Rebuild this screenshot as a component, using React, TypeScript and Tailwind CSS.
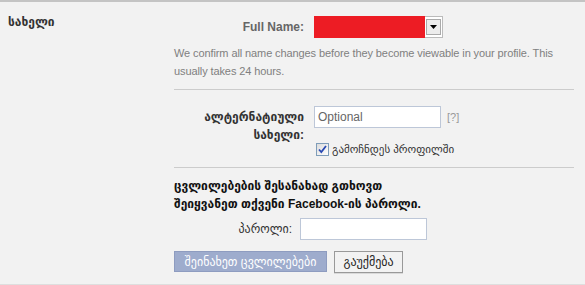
import React from "react";

const font = "font-['Liberation_Sans','DejaVu_Sans',sans-serif]";

export default function App() {
  return (
    <div
      className={`w-[585px] h-[285px] bg-[#f2f2f2] border-t-2 border-[#c4c4c4] border-b border-b-[#dedede] flex text-[12px] ${font}`}
    >
      {/* section title */}
      <div className="w-[174px] pl-2 pt-[11px] font-bold text-[#333]">სახელი</div>

      {/* fields */}
      <div className="w-[400px] pt-[14px]">
        <div className="flex items-center h-[22px]">
          <div className="w-[130px] text-right font-bold text-[#666] text-[12px]">Full Name:</div>
          <div className="ml-[10px] w-[129px] h-[22px] bg-white border border-[#bbb] flex items-center relative">
            <div className="absolute -left-px -top-px w-[111px] h-[22px] bg-[#ed1c24]" />
            <div className="ml-auto mr-[1px] w-[15px] h-[16px] bg-[#ececec] border border-[#aaa] flex items-center justify-center">
              <svg width="7" height="4" viewBox="0 0 7 4">
                <path d="M0 0h7L3.5 4z" fill="#000" />
              </svg>
            </div>
          </div>
        </div>

        <p className="mt-[6px] text-[#808080] leading-[18px] text-[11px] tracking-[-0.1px] whitespace-nowrap">
          We confirm all name changes before they become viewable in your profile. This
          <br />
          usually takes 24 hours.
        </p>

        <div className="mt-[9px] h-px bg-[#cccccc] w-[400px]" />

        <div className="flex mt-[16px]">
          <div className="w-[130px] text-right font-bold text-[#333] leading-[18px] pt-[2px]">
            ალტერნატიული
            <br />
            სახელი:
          </div>
          <div className="ml-[10px]">
            <div className="flex items-center">
              <div className="w-[127px] h-[22px] bg-white border border-[#bdc7d8] flex items-center px-[3px] text-[#666] text-[12px]">
                Optional
              </div>
              <span className="ml-[6px] text-[#999] text-[11px]">[?]</span>
            </div>
            <label className="flex items-center mt-[13px] ml-[2px] text-[#333] text-[11px]">
              <span className="w-[13px] h-[13px] border border-[#7f9db9] bg-gradient-to-br from-[#dcdcdc] to-white flex items-center justify-center">
                <svg width="9" height="9" viewBox="0 0 9 9">
                  <path d="M1 4.5l2.3 2.5L8 1" stroke="#2a4ab3" strokeWidth="1.8" fill="none" />
                </svg>
              </span>
              <span className="ml-[3px]">გამოჩნდეს პროფილში</span>
            </label>
          </div>
        </div>

        <div className="mt-[9px] h-px bg-[#cccccc] w-[400px]" />

        <p className="mt-[9px] font-bold text-[#111] leading-[18px]">
          ცვლილებების შესანახად გთხოვთ
          <br />
          შეიყვანეთ თქვენი Facebook-ის პაროლი.
        </p>

        <div className="flex items-center mt-[5px]">
          <div className="w-[118px] text-right text-[#333]">პაროლი:</div>
          <div className="ml-[8px] w-[127px] h-[22px] bg-white border border-[#bdc7d8]" />
        </div>

        <div className="flex items-center mt-[11px] gap-[7px]">
          <button className="h-[21px] w-[153px] bg-[#9eaccd] border border-[#8e9cc0] text-white text-[12px]">
            შეინახეთ ცვლილებები
          </button>
          <button className="h-[22px] w-[69px] bg-[#f2f2f2] border border-[#999] text-[#222] text-[12px] shadow-[0_1px_0_rgba(0,0,0,0.1)]">
            გაუქმება
          </button>
        </div>
      </div>
    </div>
  );
}
